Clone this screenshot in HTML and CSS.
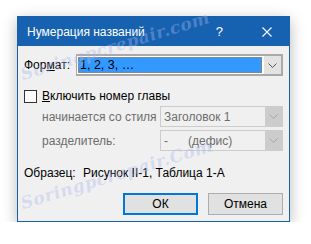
FILE: index.html
```html
<!DOCTYPE html>
<html lang="ru">
<head>
<meta charset="utf-8">
<title>Нумерация названий</title>
<link rel="stylesheet" href="styles.css">
</head>
<body>
<div class="dialog">
  <div class="titlebar">
    <span class="title">Нумерация названий</span>
    <span class="help">?</span>
    <svg class="close" width="10" height="10" viewBox="0 0 10 10"><path d="M0.5 0.5 L9.5 9.5 M9.5 0.5 L0.5 9.5" stroke="#fff" stroke-width="1.1" fill="none"/></svg>
  </div>
  <div class="content">
    <div class="row row-format">
      <span class="label">Фор<u>м</u>ат:</span>
      <div class="combo combo-active">
        <div class="combo-field"><span class="sel">1, 2, 3, …</span></div>
        <div class="combo-btn"><svg width="9" height="5" viewBox="0 0 9 5"><path d="M0.5 0.5 L4.5 4.5 L8.5 0.5" stroke="#6a5050" stroke-width="1" fill="none"/></svg></div>
      </div>
    </div>
    <div class="row row-check">
      <span class="checkbox"></span>
      <span class="label"><u>В</u>ключить номер главы</span>
    </div>
    <div class="row row-sub">
      <span class="label dim">начинается со стиля</span>
      <div class="combo combo-disabled">
        <div class="combo-field">Заголовок 1</div>
        <div class="combo-btn"><svg width="9" height="5" viewBox="0 0 9 5"><path d="M0.5 0.5 L4.5 4.5 L8.5 0.5" stroke="#a8a8a8" stroke-width="1" fill="none"/></svg></div>
      </div>
    </div>
    <div class="row row-sub row-sep">
      <span class="label dim">разделитель:</span>
      <div class="combo combo-disabled">
        <div class="combo-field">-&nbsp;&nbsp;&nbsp;&nbsp;&nbsp;&nbsp;(дефис)</div>
        <div class="combo-btn"><svg width="9" height="5" viewBox="0 0 9 5"><path d="M0.5 0.5 L4.5 4.5 L8.5 0.5" stroke="#a8a8a8" stroke-width="1" fill="none"/></svg></div>
      </div>
    </div>
    <div class="row row-sample">
      <span class="label">Образец:</span>
      <span class="sample">Рисунок II-1, Таблица 1-А</span>
    </div>
    <div class="buttons">
      <button class="btn btn-default">ОК</button>
      <button class="btn">Отмена</button>
    </div>
  </div>
  <div class="watermark wm1">Soringpcrepair.com</div>
  <div class="watermark wm2">Soringpcrepair.Com</div>
</div>
</body>
</html>
```
FILE: styles.css
```css
html, body {
  margin: 0;
  padding: 0;
  background: #ffffff;
}
body {
  padding: 16px 0 0 17px;
  font-family: "Liberation Sans", Arial, sans-serif;
  font-size: 12px;
  color: #000;
}
.dialog {
  position: relative;
  box-sizing: border-box;
  width: 273px;
  height: 206px;
  border: 1px solid #1a5fae;
  background: #f0f0f0;
  box-shadow: 0 4px 14px rgba(0, 0, 0, 0.28);
}
.titlebar {
  height: 29px;
  background: #1761b1;
  color: #fff;
  display: flex;
  align-items: center;
  padding-left: 9px;
}
.title {
  font-size: 12px;
  flex: 1;
}
.help {
  font-size: 13px;
  margin-right: 39px;
}
.close {
  margin-right: 17px;
}
.content {
  padding: 8px 5px 0 6px;
}
.row {
  display: flex;
  align-items: center;
}
.row-format {
  height: 22px;
}
.label u {
  text-decoration-thickness: 1px;
  text-underline-offset: 1px;
}
.row-format .label {
  width: 52px;
}
.combo {
  display: flex;
  box-sizing: border-box;
  height: 22px;
  border: 1px solid #a9a9a9;
}
.combo-active {
  width: 207px;
  background: #fff;
  border-width: 2px 2px 2px 1px;
}
.combo-field {
  flex: 1;
  display: flex;
  align-items: center;
}
.combo-active .combo-field {
  padding: 1px 2px 1px 1px;
}
.sel {
  flex: 1;
  align-self: stretch;
  display: flex;
  align-items: center;
  background: #3399ff;
  color: #000;
  outline: 1px dotted #d07a1a;
  outline-offset: -1px;
  padding-left: 2px;
  font-size: 12.5px;
}
.combo-btn {
  width: 17px;
  display: flex;
  align-items: center;
  justify-content: center;
  background: #e3e3e3;
}
.row-check {
  margin-top: 13px;
  height: 14px;
}
.checkbox {
  box-sizing: border-box;
  width: 13px;
  height: 13px;
  border: 1px solid #333;
  background: #fff;
  margin-right: 5px;
}
.row-sub {
  margin-top: 3px;
  padding-left: 18px;
}
.row-sub .label {
  width: 118px;
}
.row-sep {
  margin-top: 3px;
}
.dim {
  color: #6d6d6d;
}
.combo-disabled {
  width: 123px;
  height: 21px;
  border-color: #cccccc;
  background: #f0f0f0;
  color: #6d6d6d;
}
.combo-disabled .combo-field {
  padding-left: 3px;
}
.combo-disabled .combo-btn {
  background: #cccccc;
  width: 17px;
}
.row-sample {
  margin-top: 15px;
}
.row-sample .label {
  width: 59px;
}
.buttons {
  display: flex;
  justify-content: flex-end;
  gap: 10px;
  margin-top: 13px;
  padding-right: 1px;
}
.btn {
  box-sizing: border-box;
  width: 75px;
  height: 22px;
  font-family: inherit;
  font-size: 12px;
  background: #e1e1e1;
  border: 1px solid #adadad;
  color: #000;
  padding: 0;
}
.btn-default {
  border: 2px solid #0078d7;
}
.watermark {
  position: absolute;
  font-family: "DejaVu Serif", serif;
  font-style: italic;
  font-weight: bold;
  font-size: 17px;
  color: rgba(170, 185, 235, 0.38);
  white-space: nowrap;
  transform: rotate(-17deg);
  transform-origin: left bottom;
  pointer-events: none;
  letter-spacing: 0.5px;
}
.wm1 {
  left: 6px;
  top: 47px;
}
.wm2 {
  left: 6px;
  top: 176px;
}
```
